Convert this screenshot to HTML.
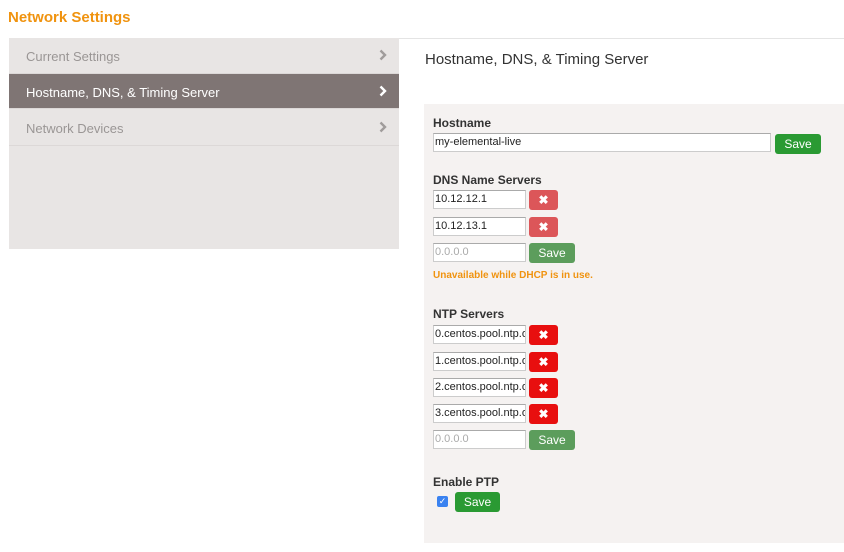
<!DOCTYPE html>
<html><head><style>
*{box-sizing:border-box;margin:0;padding:0}
body{width:844px;height:552px;background:#fff;font-family:"Liberation Sans",sans-serif;position:relative;overflow:hidden}
.a{position:absolute}
h1{position:absolute;left:8px;top:9px;font-size:15px;color:#f0930f;font-weight:bold}
.side{left:9px;top:38px;width:390px;height:211px;background:#e8e5e4}
.it{position:absolute;left:0;width:390px;height:36px;font-size:13px;color:#9a9695;padding:11px 0 0 17px;border-bottom:1px solid #dcd8d7}
.it svg{position:absolute;right:12px;top:11px}
.act{background:#7f7574;color:#fff}
.panel{left:424px;top:104px;width:420px;height:439px;background:#f5f2f1}
.lbl{position:absolute;left:433px;font-size:12px;font-weight:bold;color:#333}
.in{position:absolute;left:433px;width:93px;height:19px;background:#fff;border:1px solid #ccc;border-top-color:#aaa;font-size:11px;line-height:17px;padding:0 1px;color:#222;white-space:nowrap;overflow:hidden}
.btn{position:absolute;height:20px;border-radius:3px;color:#fff;font-size:12px;text-align:center;line-height:20px}
.x{left:529px;width:29px;font-weight:bold;font-size:12px}
.g{background:#2a9a33}.lg{background:#5c9d5c}.r1{background:#dc5659}.r2{background:#e80f0f}
</style></head><body>
<h1>Network Settings</h1>
<div class="a" style="left:399px;top:38px;width:445px;height:1px;background:#e4e4e4"></div>
<div class="a side">
<div class="it" style="top:0">Current Settings<svg width="8" height="12" viewBox="0 0 8 12"><path d="M1.5 1.5L6 6L1.5 10.5" fill="none" stroke="#a09c9b" stroke-width="2.4"/></svg></div>
<div class="it act" style="top:36px;height:35px">Hostname, DNS, &amp; Timing Server<svg width="8" height="12" viewBox="0 0 8 12"><path d="M1.5 1.5L6 6L1.5 10.5" fill="none" stroke="#fff" stroke-width="2.4"/></svg></div>
<div class="it" style="top:72px">Network Devices<svg width="8" height="12" viewBox="0 0 8 12"><path d="M1.5 1.5L6 6L1.5 10.5" fill="none" stroke="#a09c9b" stroke-width="2.4"/></svg></div>
</div>
<div class="a" style="left:425px;top:51px;font-size:15px;color:#333">Hostname, DNS, &amp; Timing Server</div>
<div class="a panel"></div>
<div class="lbl" style="top:116px">Hostname</div>
<div class="in" style="top:133px;width:338px">my-elemental-live</div>
<div class="btn g" style="left:775px;top:134px;width:46px">Save</div>
<div class="lbl" style="top:173px">DNS Name Servers</div>
<div class="in" style="top:190px">10.12.12.1</div><div class="btn x r1" style="top:190px">✖</div>
<div class="in" style="top:217px">10.12.13.1</div><div class="btn x r1" style="top:217px">✖</div>
<div class="in" style="top:243px;color:#aaa">0.0.0.0</div><div class="btn lg" style="left:529px;top:243px;width:46px">Save</div>
<div class="a" style="left:433px;top:270px;font-size:10px;font-weight:bold;color:#f0930f">Unavailable while DHCP is in use.</div>
<div class="lbl" style="top:307px">NTP Servers</div>
<div class="in" style="top:325px">0.centos.pool.ntp.org</div><div class="btn x r2" style="top:325px">✖</div>
<div class="in" style="top:352px">1.centos.pool.ntp.org</div><div class="btn x r2" style="top:352px">✖</div>
<div class="in" style="top:378px">2.centos.pool.ntp.org</div><div class="btn x r2" style="top:378px">✖</div>
<div class="in" style="top:404px">3.centos.pool.ntp.org</div><div class="btn x r2" style="top:404px">✖</div>
<div class="in" style="top:430px;color:#aaa">0.0.0.0</div><div class="btn lg" style="left:529px;top:430px;width:46px">Save</div>
<div class="lbl" style="top:475px">Enable PTP</div>
<div class="a" style="left:437px;top:496px;width:11px;height:11px;border-radius:2px;background:#3a82f0;color:#fff;font-size:9px;line-height:11px;text-align:center">✓</div>
<div class="btn g" style="left:455px;top:492px;width:45px">Save</div>
</body></html>
